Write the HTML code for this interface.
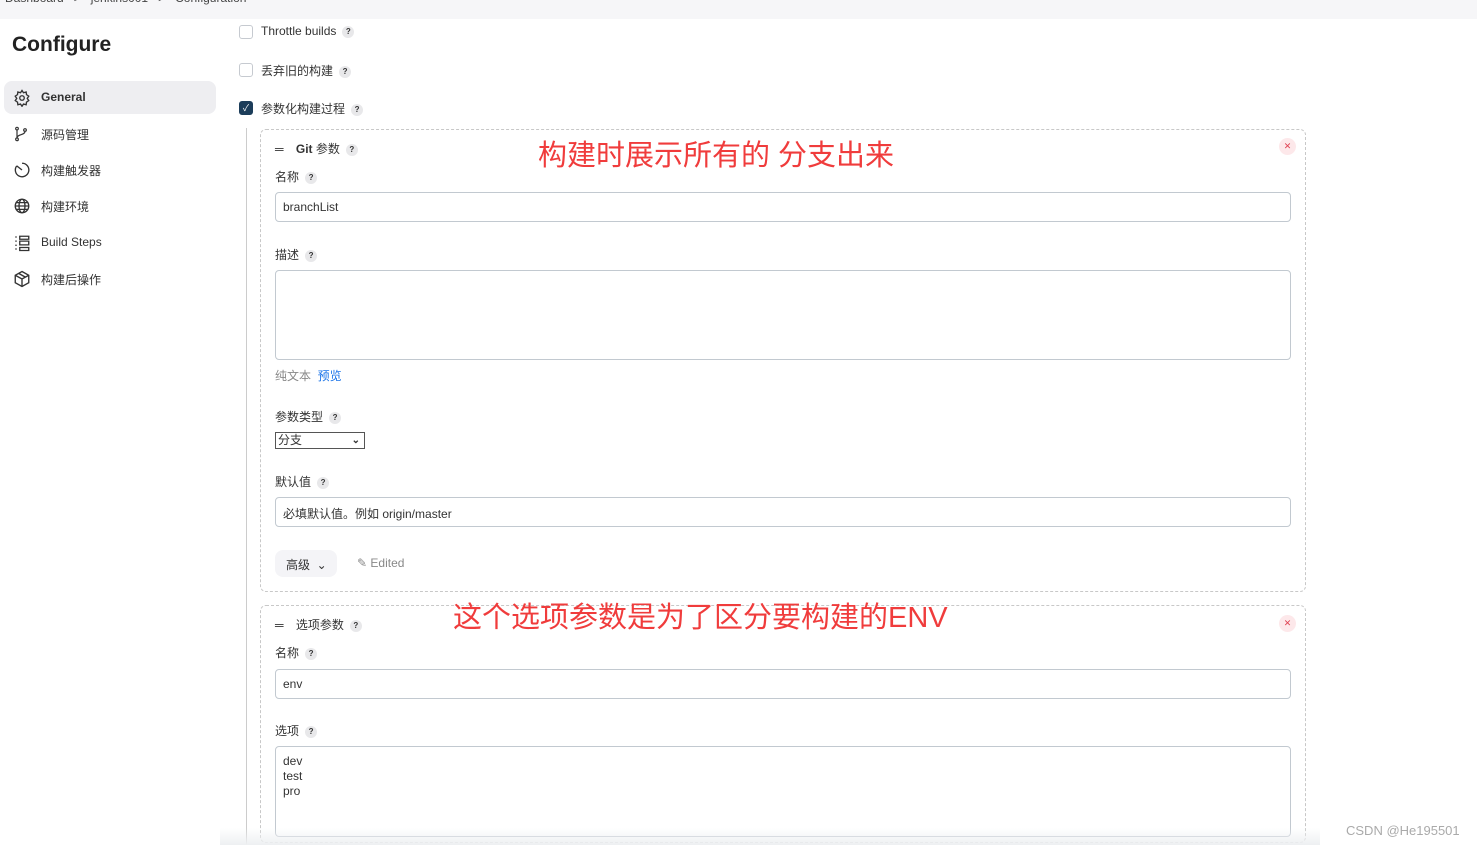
<!DOCTYPE html>
<html style="width:1477px;height:845px;overflow:hidden"><head><meta charset="utf-8"><style>
*{box-sizing:border-box;margin:0;padding:0}
body{width:1477px;height:845px;overflow:hidden;background:#fff;font-family:"Liberation Sans","Noto Sans CJK SC",sans-serif;font-size:12px;color:#333;position:relative}
.a{position:absolute}
.top{left:0;top:0;width:1477px;height:19px;background:#f6f6f8}
.crumb{top:-9px;left:5px;font-size:12px;color:#444;white-space:nowrap}
.h1{left:12px;top:33px;font-size:21px;font-weight:bold;color:#222}
.nav{left:4px;width:212px;height:33px;border-radius:8px;font-size:12px;color:#333}
.nav span{position:absolute;left:37px;top:9px}
.nav svg{position:absolute;left:9px;top:8px}
.q{display:inline-block;width:12px;height:12px;border-radius:50%;background:#e8e8ea;color:#333;font-size:8px;text-align:center;line-height:12px;font-weight:bold;vertical-align:middle;margin-left:6px}
.cb{width:14px;height:14px;border:1px solid #c6cad0;border-radius:3px;background:#fff}
.lbl{font-size:12px;color:#333;white-space:nowrap}
.box{border:1px dashed #c8c8c8;border-radius:6px}
.inp{left:275px;width:1016px;border:1px solid #c2c9d0;border-radius:4px;background:#fff;font-size:12px;color:#333;padding:7px}
.x{width:17px;height:17px;border-radius:50%;background:#fde8ea;color:#e04050;font-size:9px;text-align:center;line-height:17px}
.red{color:#f03c3c;font-size:29px;white-space:nowrap}
</style></head><body>
<div class="a top"></div>
<div class="a crumb">Dashboard &nbsp;&nbsp;&gt;&nbsp;&nbsp; jenkins001 &nbsp;&nbsp;&gt;&nbsp;&nbsp; Configuration</div>
<div class="a h1">Configure</div>

<div class="a nav" style="top:81px;background:#eeeef1;font-weight:bold"><svg width="18" height="18" viewBox="0 0 24 24" fill="none" stroke="#333" stroke-width="1.8"><circle cx="12" cy="12" r="3"/><path d="M12 2l2 3 3.5-1 .5 3.5 3 2-2 3 2 3-3 2-.5 3.5-3.5-1-2 3-2-3-3.5 1-.5-3.5-3-2 2-3-2-3 3-2 .5-3.5 3.5 1z"/></svg><span>General</span></div>
<div class="a nav" style="top:117px"><svg width="16" height="18" viewBox="0 0 24 24" fill="none" stroke="#333" stroke-width="1.8"><circle cx="6" cy="20" r="2"/><circle cx="6" cy="4" r="2"/><circle cx="18" cy="6" r="2"/><path d="M6 6v12M18 8c0 6-12 4-12 10"/></svg><span>源码管理</span></div>
<div class="a nav" style="top:153px"><svg width="18" height="18" viewBox="0 0 24 24" fill="none" stroke="#333" stroke-width="1.8"><path d="M12 3a9 9 0 1 1-7 3.5"/><path d="M5 6.5l7 5.5"/></svg><span>构建触发器</span></div>
<div class="a nav" style="top:189px"><svg width="18" height="18" viewBox="0 0 24 24" fill="none" stroke="#333" stroke-width="1.8"><circle cx="12" cy="12" r="9"/><ellipse cx="12" cy="12" rx="4" ry="9"/><path d="M3 12h18M4.5 7.5h15M4.5 16.5h15"/></svg><span>构建环境</span></div>
<div class="a nav" style="top:226px"><svg width="18" height="18" viewBox="0 0 24 24" fill="none" stroke="#333" stroke-width="1.8"><path d="M3 4h2M3 9.5h2M3 15h2M3 20h2M9 3h12v4H9zM9 9.5h12v5H9zM9 18h12v4H9z"/></svg><span>Build Steps</span></div>
<div class="a nav" style="top:262px"><svg width="18" height="18" viewBox="0 0 24 24" fill="none" stroke="#333" stroke-width="1.8"><path d="M12 2l9 5v10l-9 5-9-5V7z"/><path d="M3 7l9 5 9-5M12 12v10M7.5 4.5l9 5"/></svg><span>构建后操作</span></div>

<div class="a cb" style="left:239px;top:25px"></div><div class="a lbl" style="left:261px;top:24px">Throttle builds<span class="q">?</span></div>
<div class="a cb" style="left:239px;top:63px"></div><div class="a lbl" style="left:261px;top:62px">丢弃旧的构建<span class="q">?</span></div>
<div class="a cb" style="left:239px;top:101px;background:#1c3d5a;border-color:#1c3d5a;color:#fff;font-size:9px;text-align:center;line-height:12px">✓</div><div class="a lbl" style="left:261px;top:100px">参数化构建过程<span class="q">?</span></div>

<div class="a" style="left:246px;top:128px;width:1px;height:717px;background:#ccc"></div>

<div class="a box" style="left:260px;top:129px;width:1046px;height:463px"></div>
<div class="a lbl" style="left:275px;top:140px"><span style="letter-spacing:-1px">═</span>&nbsp;&nbsp;&nbsp;&nbsp;<b>Git</b> 参数<span class="q">?</span></div>
<div class="a x" style="left:1279px;top:138px">✕</div>
<div class="a red" style="left:538px;top:132px">构建时展示所有的 分支出来</div>
<div class="a lbl" style="left:275px;top:168px">名称<span class="q">?</span></div>
<div class="a inp" style="top:192px;height:30px">branchList</div>
<div class="a lbl" style="left:275px;top:246px">描述<span class="q">?</span></div>
<div class="a inp" style="top:270px;height:90px"></div>
<div class="a lbl" style="left:275px;top:367px;color:#888">纯文本 <span style="color:#1a73e8">&nbsp;预览</span></div>
<div class="a lbl" style="left:275px;top:408px">参数类型<span class="q">?</span></div>
<div class="a" style="left:275px;top:432px;width:90px;height:17px;border:1px solid #555;font-size:12px;padding-left:2px;line-height:15px">分支<span style="position:absolute;right:4px;top:0;font-size:10px;font-weight:bold">⌄</span></div>
<div class="a lbl" style="left:275px;top:473px">默认值<span class="q">?</span></div>
<div class="a inp" style="top:497px;height:30px">必填默认值。例如 origin/master</div>
<div class="a" style="left:275px;top:550px;width:62px;height:27px;background:#f4f4f7;border-radius:8px;font-size:12px;padding:6px 0 0 11px">高级 &nbsp;⌄</div>
<div class="a lbl" style="left:357px;top:556px;color:#888">✎ Edited</div>

<div class="a box" style="left:260px;top:605px;width:1046px;height:238px"></div>
<div class="a lbl" style="left:275px;top:616px"><span style="letter-spacing:-1px">═</span>&nbsp;&nbsp;&nbsp;&nbsp;选项参数<span class="q">?</span></div>
<div class="a x" style="left:1279px;top:615px">✕</div>
<div class="a red" style="left:453px;top:594px">这个选项参数是为了区分要构建的ENV</div>
<div class="a lbl" style="left:275px;top:644px">名称<span class="q">?</span></div>
<div class="a inp" style="top:669px;height:30px">env</div>
<div class="a lbl" style="left:275px;top:722px">选项<span class="q">?</span></div>
<div class="a inp" style="top:746px;height:91px;line-height:15px">dev<br>test<br>pro</div>
<div class="a" style="left:220px;top:828px;width:1100px;height:17px;background:linear-gradient(#fff0,#eef0f2)"></div>
<div class="a" style="left:1346px;top:823px;font-size:13px;color:#aaa">CSDN @He195501</div>
</body></html>
